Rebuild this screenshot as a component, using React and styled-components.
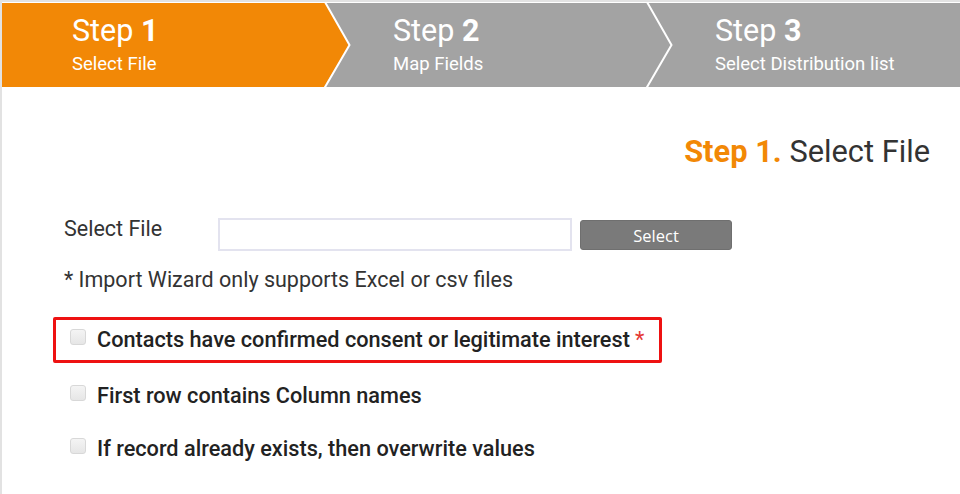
import React from "react";
import styled, { createGlobalStyle } from "styled-components";

const Global = createGlobalStyle`
  html, body { margin: 0; padding: 0; background: #fff; }
  body { font-family: Roboto, "Liberation Sans", sans-serif; }
`;

const Page = styled.div`
  box-sizing: border-box;
  width: 960px;
  height: 494px;
  overflow: hidden;
  border-top: 2px solid #e2e2e2;
  border-left: 2px solid #e2e2e2;
  background: #fff;
`;

const Header = styled.div`
  display: flex;
  height: 84px;
  margin-top: 1px;
  background: #a3a3a3;
`;

const StepItem = styled.div`
  position: relative;
  box-sizing: border-box;
  flex: 0 0 ${(p) => p.$w}px;
  padding: 11px 0 0 70px;
  background: ${(p) => (p.$active ? "#f28806" : "#a3a3a3")};
  color: #fff;
  z-index: ${(p) => p.$z};
`;

const StepTitle = styled.div`
  font-size: 30.5px;
  line-height: 34px;
  font-weight: 400;
  b { font-weight: 700; }
`;

const StepSub = styled.div`
  margin-top: 6px;
  font-size: 18.5px;
  line-height: 20px;
`;

const Chevron = styled.svg`
  position: absolute;
  top: 0;
  left: 100%;
  width: 30px;
  height: 84px;
`;

const Content = styled.div`
  padding: 47px 30px 0 62px;
`;

const Heading = styled.h1`
  margin: 0;
  text-align: right;
  font-size: 30.8px;
  line-height: 36px;
  font-weight: 400;
  color: #333;
  span { color: #f28806; font-weight: 700; }
`;

const FileRow = styled.div`
  display: flex;
  align-items: flex-start;
  margin-top: 48px;
`;

const Label = styled.div`
  width: 154px;
  margin-top: -1px;
  font-size: 21.5px;
  line-height: 24px;
  color: #333;
`;

const FileInput = styled.div`
  box-sizing: border-box;
  width: 354px;
  height: 33px;
  border: 2px solid #e3e3ef;
  background: #fff;
`;

const SelectButton = styled.button`
  box-sizing: border-box;
  margin: 2px 0 0 8px;
  width: 152px;
  height: 30px;
  border: 1px solid #6f6f6f;
  border-radius: 3px;
  background: #7a7a7a;
  color: #fff;
  font-family: "Open Sans", Roboto, sans-serif;
  font-size: 16.5px;
  line-height: 20px;
  padding: 2px 0 0;
`;

const Note = styled.div`
  margin-top: 17px;
  font-size: 21.5px;
  line-height: 24px;
  color: #333;
`;

const CheckRow = styled.label`
  display: flex;
  align-items: center;
  gap: 11px;
  box-sizing: border-box;
  width: ${(p) => (p.$boxed ? "609px" : "auto")};
  height: ${(p) => (p.$boxed ? "46px" : "auto")};
  margin-left: ${(p) => (p.$boxed ? "-11px" : "6px")};
  margin-top: ${(p) => p.$mt}px;
  padding-left: ${(p) => (p.$boxed ? "14px" : "0")};
  border: ${(p) => (p.$boxed ? "3px solid #ee1111" : "none")};
  border-radius: 2px;
  font-size: 21.7px;
  line-height: 24px;
  font-weight: 500;
  color: #222;
`;

const Box = styled.span`
  box-sizing: border-box;
  flex: 0 0 16px;
  width: 16px;
  height: 16px;
  margin-top: -6px;
  border: 1px solid #d8d8d8;
  border-radius: 3px;
  background: linear-gradient(#f4f4f4, #e6e6e6);
`;

const Req = styled.span`
  color: #e53935;
  margin-left: 5px;
  font-weight: 400;
`;

const steps = [
  { n: "1", sub: "Select File", w: 321, active: true },
  { n: "2", sub: "Map Fields", w: 322 },
  { n: "3", sub: "Select Distribution list", w: 315 },
];

export default function App() {
  return (
    <>
      <Global />
      <Page>
        <Header>
          {steps.map((s, i) => (
            <StepItem key={s.n} $w={s.w} $active={s.active} $z={3 - i}>
              <StepTitle>
                Step <b>{s.n}</b>
              </StepTitle>
              <StepSub>{s.sub}</StepSub>
              {i < 2 && (
                <Chevron viewBox="0 0 30 84">
                  {s.active && (
                    <polygon points="0,0 2,0 26,42 1,84 0,84" fill="#f28806" />
                  )}
                  <polyline
                    points="2,-1 26.5,42 1.5,85"
                    fill="none"
                    stroke="#fff"
                    strokeWidth="2"
                  />
                </Chevron>
              )}
            </StepItem>
          ))}
        </Header>
        <Content>
          <Heading>
            <span>Step 1.</span> Select File
          </Heading>
          <FileRow>
            <Label>Select File</Label>
            <FileInput />
            <SelectButton>Select</SelectButton>
          </FileRow>
          <Note>* Import Wizard only supports Excel or csv files</Note>
          <CheckRow $boxed $mt={25}>
            <Box />
            <span>
              Contacts have confirmed consent or legitimate interest
              <Req>*</Req>
            </span>
          </CheckRow>
          <CheckRow $mt={21}>
            <Box />
            <span>First row contains Column names</span>
          </CheckRow>
          <CheckRow $mt={29}>
            <Box />
            <span>If record already exists, then overwrite values</span>
          </CheckRow>
        </Content>
      </Page>
    </>
  );
}
